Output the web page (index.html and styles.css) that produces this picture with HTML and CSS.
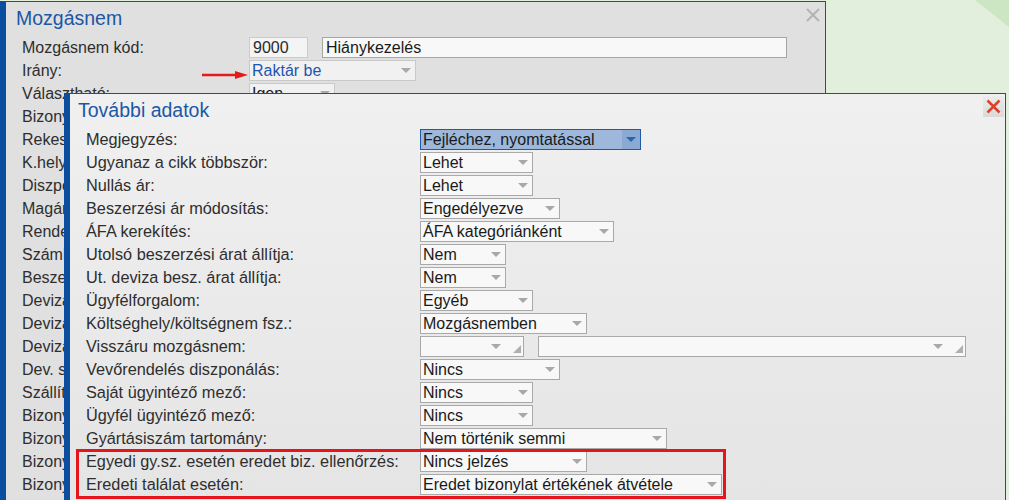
FILE: index.html
```html
<!DOCTYPE html>
<html>
    <head>
        <title>Mozgásnem</title>
        <meta charset="utf-8" />
        <link rel="stylesheet" href="styles.css">
    </head>
    <body>
        <svg class="desk-corner" width="34" height="27" viewBox="0 0 34 27"><polygon points="0,0 34,0 34,27" fill="#cce5c3"/></svg>

        <div class="window window-main">
            <div class="window-title">
                <h2>Mozgásnem</h2>
                <span class="close-btn close-gray">
                    <svg width="14" height="14" viewBox="0 0 14 14"><path d="M1 1 L13 13 M13 1 L1 13" stroke="#b3b3b3" stroke-width="2"/></svg>
                </span>
            </div>
            <div class="form">
                <div class="row">
                    <label>Mozgásnem kód:</label>
                    <div class="field">
                        <span class="input input-code">9000</span>
                        <span class="input input-name">Hiánykezelés</span>
                    </div>
                </div>
                <div class="row">
                    <label>Irány:</label>
                    <span class="select select-light w-167 text-blue">Raktár be</span>
                </div>
                <div class="row">
                    <label>Választható:</label>
                    <span class="select select-light w-86">Igen</span>
                </div>
                <!-- rows below are covered by the second window -->
                <div class="row"><label>Bizonylat típus:</label></div>
                <div class="row"><label>Rekesz kezelés:</label></div>
                <div class="row"><label>K.hely kötelező:</label></div>
                <div class="row"><label>Diszpozíció:</label></div>
                <div class="row"><label>Magánszemély:</label></div>
                <div class="row"><label>Rendelés kezelés:</label></div>
                <div class="row"><label>Számlázható:</label></div>
                <div class="row"><label>Beszerzési ár:</label></div>
                <div class="row"><label>Deviza kezelés:</label></div>
                <div class="row"><label>Deviza árfolyam:</label></div>
                <div class="row"><label>Deviza összeg:</label></div>
                <div class="row"><label>Dev. szállító:</label></div>
                <div class="row"><label>Szállító:</label></div>
                <div class="row"><label>Bizonylat 1:</label></div>
                <div class="row"><label>Bizonylat 2:</label></div>
                <div class="row"><label>Bizonylat 3:</label></div>
                <div class="row"><label>Bizonylat 4:</label></div>
            </div>

            <!-- annotation arrow pointing at the direction field -->
            <svg class="pointer-arrow" width="50" height="14" viewBox="0 0 50 14">
                <line x1="2" y1="7" x2="38" y2="7" stroke="#e31b1b" stroke-width="2.5"/>
                <polygon points="35,3 48,7 35,11" fill="#e31b1b"/>
            </svg>
        </div>

        <div class="window window-extra">
            <div class="window-title">
                <h2>További adatok</h2>
                <span class="close-btn close-red">
                    <svg width="15" height="15" viewBox="0 0 15 15"><path d="M1.5 1.5 L13.5 13.5 M13.5 1.5 L1.5 13.5" stroke="#d8452c" stroke-width="2.6"/></svg>
                </span>
            </div>
            <div class="form">
                <div class="row">
                    <label>Megjegyzés:</label>
                    <span class="select select-active w-221">Fejléchez, nyomtatással</span>
                </div>
                <div class="row">
                    <label>Ugyanaz a cikk többször:</label>
                    <span class="select w-113">Lehet</span>
                </div>
                <div class="row">
                    <label>Nullás ár:</label>
                    <span class="select w-113">Lehet</span>
                </div>
                <div class="row">
                    <label>Beszerzési ár módosítás:</label>
                    <span class="select w-140">Engedélyezve</span>
                </div>
                <div class="row">
                    <label>ÁFA kerekítés:</label>
                    <span class="select w-194">ÁFA kategóriánként</span>
                </div>
                <div class="row">
                    <label>Utolsó beszerzési árat állítja:</label>
                    <span class="select w-86">Nem</span>
                </div>
                <div class="row">
                    <label>Ut. deviza besz. árat állítja:</label>
                    <span class="select w-86">Nem</span>
                </div>
                <div class="row">
                    <label>Ügyfélforgalom:</label>
                    <span class="select w-113">Egyéb</span>
                </div>
                <div class="row">
                    <label>Költséghely/költségnem fsz.:</label>
                    <span class="select w-167">Mozgásnemben</span>
                </div>
                <div class="row">
                    <label>Visszáru mozgásnem:</label>
                    <div class="field">
                        <span class="select select-resize w-104"></span>
                        <span class="select select-resize w-428"></span>
                    </div>
                </div>
                <div class="row">
                    <label>Vevőrendelés diszponálás:</label>
                    <span class="select w-140">Nincs</span>
                </div>
                <div class="row">
                    <label>Saját ügyintéző mező:</label>
                    <span class="select w-113">Nincs</span>
                </div>
                <div class="row">
                    <label>Ügyfél ügyintéző mező:</label>
                    <span class="select w-113">Nincs</span>
                </div>
                <div class="row">
                    <label>Gyártásiszám tartomány:</label>
                    <span class="select w-247">Nem történik semmi</span>
                </div>
                <div class="row">
                    <label>Egyedi gy.sz. esetén eredet biz. ellenőrzés:</label>
                    <span class="select w-167">Nincs jelzés</span>
                </div>
                <div class="row">
                    <label>Eredeti találat esetén:</label>
                    <span class="select w-302">Eredet bizonylat értékének átvétele</span>
                </div>
            </div>

            <div class="highlight"></div>
        </div>
    </body>
</html>
```

FILE: styles.css
```css
body {
    margin: 0;
    height: 500px;
    overflow: hidden;
    position: relative;
    background: #e2efdd;
    font-family: "Liberation Sans", Arial, sans-serif;
    font-size: 16px;
    color: #2e2e2e;
}

.desk-corner {
    position: absolute;
    top: 0;
    right: 0;
}

.window {
    position: absolute;
    box-sizing: border-box;
    border: 1px solid #1d4f91;
    border-left: 6px solid #0b4d9e;
}

.window-main {
    left: 0;
    top: 1px;
    width: 826px;
    height: 520px;
    background: #e0e0e0;
}

.window-extra {
    left: 64px;
    top: 93px;
    width: 942px;
    height: 430px;
    background: linear-gradient(#f0f0f0, #e4e4e4);
}

.window-title {
    position: relative;
    height: 34px;
}

.window-title h2 {
    margin: 0;
    font-size: 19.5px;
    font-weight: normal;
    line-height: 32px;
    color: #1b57a5;
}

.window-main .window-title h2 {
    padding-left: 10px;
}

.window-extra .window-title h2 {
    padding-left: 8px;
}

.close-btn {
    position: absolute;
    display: flex;
    align-items: center;
    justify-content: center;
}

.close-gray {
    top: 6px;
    right: 5px;
    width: 14px;
    height: 14px;
}

.close-red {
    top: 2px;
    right: 1px;
    width: 21px;
    height: 21px;
    background: linear-gradient(#ececec, #dadada);
}

.form {
    display: flex;
    flex-direction: column;
    padding-left: 16px;
}

.row {
    display: flex;
    align-items: center;
    height: 23px;
    white-space: nowrap;
}

.row label {
    flex: none;
    line-height: 23px;
}

.window-main .row label {
    width: 227px;
}

.window-extra .row label {
    width: 334px;
    font-size: 16.3px;
}

.field {
    display: flex;
    gap: 14px;
}

.input,
.select {
    box-sizing: border-box;
    display: block;
    height: 21px;
    line-height: 19px;
    color: #1a1a1a;
}

.input {
    padding-left: 3px;
    background: #f8f8f8;
    border: 1px solid #a5a5a5;
}

.input-code {
    width: 59px;
    background: #f4f4f4;
    border-color: #cbcbcb;
    color: #2a2a2a;
}

.input-name {
    width: 465px;
}

.select {
    position: relative;
    padding-left: 2px;
    background: #f8f8f8;
    border: 1px solid #a9a9a9;
}

.select::after {
    content: "";
    position: absolute;
    right: 4px;
    top: 7px;
    border-left: 5px solid transparent;
    border-right: 5px solid transparent;
    border-top: 5px solid #a8a8a8;
}

.select-light {
    background: #f1f1f1;
    border-color: #c9c9c9;
}

.text-blue {
    color: #1c56b0;
}

.select-active {
    background: #9db8da;
    border-color: #1e5aa8;
}

.select-active::before {
    content: "";
    position: absolute;
    top: 0;
    right: 0;
    bottom: 0;
    width: 18px;
    background: #8aaad3;
}

.select-active::after {
    border-top-color: #2a66b0;
}

.select-resize::after {
    right: 22px;
}

.select-resize::before {
    content: "";
    position: absolute;
    right: 2px;
    bottom: 3px;
    border-left: 8px solid transparent;
    border-bottom: 8px solid #b0b0b0;
}

.w-86 { width: 86px; }
.w-104 { width: 104px; }
.w-113 { width: 113px; }
.w-140 { width: 140px; }
.w-167 { width: 167px; }
.w-194 { width: 194px; }
.w-221 { width: 221px; }
.w-247 { width: 247px; }
.w-302 { width: 302px; }
.w-428 { width: 428px; }

.pointer-arrow {
    position: absolute;
    left: 194px;
    top: 66px;
}

.highlight {
    position: absolute;
    left: 6px;
    top: 355px;
    width: 650px;
    height: 50px;
    box-sizing: border-box;
    border: 3px solid #e8141c;
}
```
